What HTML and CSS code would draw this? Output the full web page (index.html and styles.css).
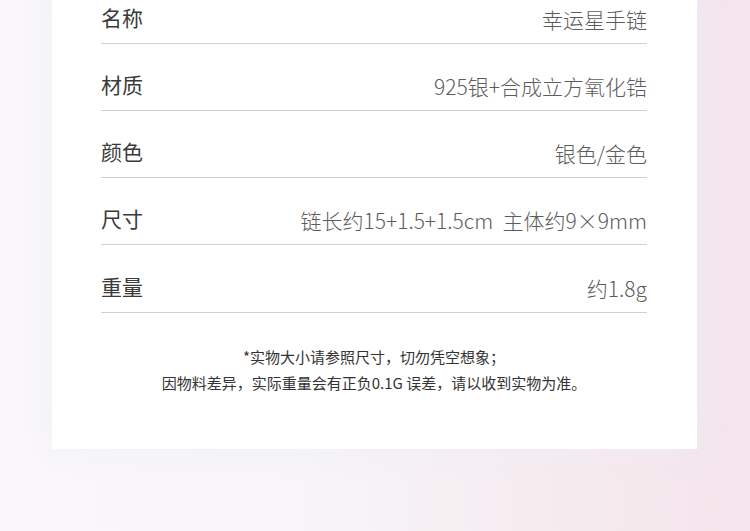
FILE: index.html
```html
<!DOCTYPE html>
<html lang="zh-CN">
<head>
    <meta charset="UTF-8">
    <meta name="viewport" content="width=device-width, initial-scale=1.0">
    <title>商品参数</title>
    <link rel="stylesheet" href="styles.css">
</head>
<body>
    <div class="page">
        <div class="card">
            <div class="spec-list">
                <div class="spec-row">
                    <span class="spec-label">名称</span>
                    <span class="spec-value">幸运星手链</span>
                </div>
                <div class="spec-row">
                    <span class="spec-label">材质</span>
                    <span class="spec-value">925银+合成立方氧化锆</span>
                </div>
                <div class="spec-row">
                    <span class="spec-label">颜色</span>
                    <span class="spec-value">银色/金色</span>
                </div>
                <div class="spec-row">
                    <span class="spec-label">尺寸</span>
                    <span class="spec-value">链长约15+1.5+1.5cm&nbsp;&nbsp;主体约9×9mm</span>
                </div>
                <div class="spec-row">
                    <span class="spec-label">重量</span>
                    <span class="spec-value">约1.8g</span>
                </div>
            </div>

            <div class="note">
                <p>*实物大小请参照尺寸，切勿凭空想象；</p>
                <p>因物料差异，实际重量会有正负0.1G 误差，请以收到实物为准。</p>
            </div>
        </div>
    </div>
</body>
</html>
```

FILE: styles.css
```css
html, body {
    margin: 0;
    padding: 0;
}
body {
    font-family: "Noto Sans CJK SC", "Noto Sans", sans-serif;
    background: linear-gradient(to right, #f9f7f9 0%, #f7f5f8 40%, #f5ebef 75%, #f4e4eb 100%);
    min-height: 531px;
    overflow: hidden;
}
.page {
    width: 750px;
}
.card {
    width: 645px;
    margin: -23px 0 0 52px;
    background: #fff;
    padding: 0 50px 53px 49px;
    box-sizing: border-box;
    box-shadow: 0 0 30px rgba(236, 238, 248, 0.6);
}
.spec-row {
    border-bottom: 1px solid #cfcfcf;
    display: flex;
    align-items: flex-end;
    justify-content: space-between;
    padding-bottom: 12px;
    height: 54px;
}
.spec-row:last-child {
    height: 55px;
}
.spec-label {
    font-size: 21px;
    line-height: 28px;
    color: #3a3a3a;
}
.spec-value {
    font-size: 21px;
    line-height: 28px;
    color: #5c5c5c;
    font-weight: 300;
    position: relative;
    top: 2px;
}
.note {
    margin-top: 31px;
    text-align: center;
    font-size: 15px;
    line-height: 26px;
    color: #333;
}
.note p {
    margin: 0;
}
```
